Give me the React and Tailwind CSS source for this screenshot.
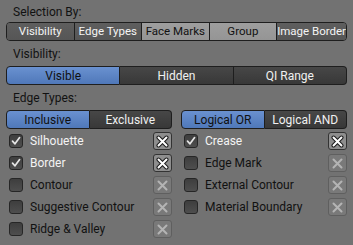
import { useState } from 'react'

const SELECTION_BY = [
  { label: 'Visibility', on: true },
  { label: 'Edge Types', on: true },
  { label: 'Face Marks', on: false },
  { label: 'Group', on: false },
  { label: 'Image Border', on: true },
]

const LEFT_EDGES = [
  { label: 'Silhouette', checked: true, exclude: true },
  { label: 'Border', checked: true, exclude: true },
  { label: 'Contour', checked: false, exclude: false },
  { label: 'Suggestive Contour', checked: false, exclude: false },
  { label: 'Ridge & Valley', checked: false, exclude: false },
]

const RIGHT_EDGES = [
  { label: 'Crease', checked: true, exclude: true },
  { label: 'Edge Mark', checked: false, exclude: false },
  { label: 'External Contour', checked: false, exclude: false },
  { label: 'Material Boundary', checked: false, exclude: false },
]

function Label({ children }) {
  return <div className="flex items-center pl-[7px] text-[12px] text-[#111]">{children}</div>
}

// segmento de un grupo de botones tipo radio (azul = activo)
function Segment({ label, active, first, last, onClick }) {
  return (
    <button
      type="button"
      onClick={onClick}
      className={[
        'flex-1 h-full whitespace-nowrap border-y border-[#1e1e1e] text-[12px] leading-none',
        first ? 'rounded-l-[4px] border-l' : '',
        last ? 'rounded-r-[4px] border-r' : 'border-r',
        active
          ? 'bg-gradient-to-b from-[#6a91d0] to-[#4f78b9] text-[#111]'
          : 'bg-gradient-to-b from-[#474747] to-[#383838] text-[#f0f0f0]',
      ].join(' ')}
    >
      {label}
    </button>
  )
}

function Checkbox({ checked }) {
  return (
    <span className="flex h-[14px] w-[14px] items-center justify-center rounded-[3px] border border-[#262626] bg-gradient-to-b from-[#3e3e3e] to-[#4e4e4e]">
      {checked && (
        <svg width="10" height="10" viewBox="0 0 10 10">
          <path d="M1.5 5.2 L4 7.8 L8.6 1.6" fill="none" stroke="#e6e6e6" strokeWidth="1.7" strokeLinecap="round" strokeLinejoin="round" />
        </svg>
      )}
    </span>
  )
}

function ExcludeButton({ on }) {
  return (
    <span
      className={
        on
          ? 'flex h-[18px] w-[19px] items-center justify-center rounded-[3px] border border-[#333333] bg-[#8e8e8e]'
          : 'flex h-[18px] w-[19px] items-center justify-center rounded-[3px] border border-[#5f5f5f] bg-[#797979]'
      }
    >
      <svg width="13" height="13" viewBox="0 0 13 13">
        {on && (
          <path d="M2.5 2.5 L10.5 10.5 M10.5 2.5 L2.5 10.5" stroke="#1a1a1a" strokeWidth="4" strokeLinecap="round" />
        )}
        <path
          d="M2.5 2.5 L10.5 10.5 M10.5 2.5 L2.5 10.5"
          stroke={on ? '#ffffff' : '#b4b4b4'}
          strokeWidth="2"
          strokeLinecap="round"
        />
      </svg>
    </span>
  )
}

function EdgeRow({ item }) {
  return (
    <div className="flex h-[22px] items-center">
      <span className="pl-[3px]">
        <Checkbox checked={item.checked} />
      </span>
      <span className={`ml-[7px] flex-1 whitespace-nowrap text-[12px] ${item.checked ? 'text-[#f4f4f4]' : 'text-[#111]'}`}>
        {item.label}
      </span>
      <ExcludeButton on={item.exclude} />
    </div>
  )
}

export default function App() {
  const [visibility, setVisibility] = useState('Visible')
  const [edgeMode, setEdgeMode] = useState('Inclusive')
  const [logic, setLogic] = useState('Logical OR')

  return (
    <div className="h-[245px] w-[353px] overflow-hidden bg-[#727272] px-[6px] font-['Roboto',sans-serif]">
      <div className="h-[22px] pt-[3px]">
        <Label>Selection By:</Label>
      </div>

      <div className="flex h-[19px] overflow-hidden rounded-[4px] border border-[#1e1e1e]">
        {SELECTION_BY.map((item, i) => (
          <div
            key={item.label}
            className={[
              'flex flex-1 items-center justify-center whitespace-nowrap text-[11.5px] leading-none',
              i < SELECTION_BY.length - 1 ? 'border-r border-[#1e1e1e]' : '',
              item.on
                ? 'bg-gradient-to-b from-[#5e5e5e] to-[#565656] text-[#f4f4f4]'
                : 'bg-gradient-to-b from-[#9e9e9e] to-[#959595] text-[#111]',
            ].join(' ')}
          >
            {item.label}
          </div>
        ))}
      </div>

      <div className="flex h-[25px] items-center">
        <Label>Visibility:</Label>
      </div>

      <div className="flex h-[19px]">
        {['Visible', 'Hidden', 'QI Range'].map((v, i, arr) => (
          <Segment
            key={v}
            label={v}
            active={visibility === v}
            first={i === 0}
            last={i === arr.length - 1}
            onClick={() => setVisibility(v)}
          />
        ))}
      </div>

      <div className="flex h-[25px] items-center">
        <Label>Edge Types:</Label>
      </div>

      <div className="flex h-[19px] gap-[9px]">
        <div className="flex flex-1">
          {['Inclusive', 'Exclusive'].map((v, i) => (
            <Segment key={v} label={v} active={edgeMode === v} first={i === 0} last={i === 1} onClick={() => setEdgeMode(v)} />
          ))}
        </div>
        <div className="flex flex-1">
          {['Logical OR', 'Logical AND'].map((v, i) => (
            <Segment key={v} label={v} active={logic === v} first={i === 0} last={i === 1} onClick={() => setLogic(v)} />
          ))}
        </div>
      </div>

      <div className="mt-[1px] flex gap-[9px]">
        <div className="flex-1">
          {LEFT_EDGES.map((item) => (
            <EdgeRow key={item.label} item={item} />
          ))}
        </div>
        <div className="flex-1">
          {RIGHT_EDGES.map((item) => (
            <EdgeRow key={item.label} item={item} />
          ))}
        </div>
      </div>
    </div>
  )
}
